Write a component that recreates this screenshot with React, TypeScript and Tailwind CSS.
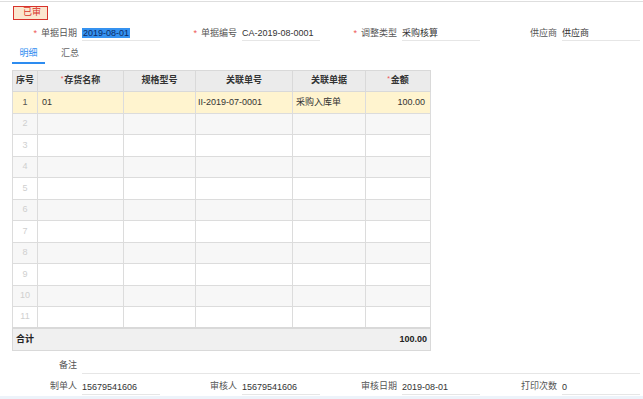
import React from "react";

const font = { fontFamily: '"Liberation Sans", "Noto Sans CJK SC", sans-serif' };

type FieldProps = { label: string; value?: string; required?: boolean; selected?: boolean };

const Field: React.FC<FieldProps> = ({ label, value, required, selected }) => (
  <div className="flex items-center w-[160px] h-[15px]">
    <div className="w-[78px] text-right text-[#555] pr-[1px]">
      {required && <span className="text-[#ee5555] mr-[4px]">*</span>}
      {label}
    </div>
    <div className="ml-[4px] w-[78px] h-[15px] border-b border-[#e6e6e6] text-[#333] leading-[14px]">
      {selected ? <span className="bg-[#3592f0] text-[#0c2a66] px-[1px]">{value}</span> : value}
    </div>
  </div>
);

const cols = ["w-[25px]", "w-[86px]", "w-[72px]", "w-[97px]", "w-[73px]", "w-[65px]"];

export default function App() {
  const rows = Array.from({ length: 11 }, (_, i) => i + 1);
  return (
    <div style={font} className="w-[643px] h-[399px] bg-white text-[9px] overflow-hidden flex flex-col">
      <div className="h-[2px] border-t border-[#dedede] mt-[1px]" />

      {/* status badge */}
      <div className="ml-[13px] mt-[3px] w-[35px] h-[14px] border-[1.5px] border-[#d8322b] bg-[#fbe6cf] text-[#d8322b] flex items-center pl-[9px]">
        已审
      </div>

      {/* head fields */}
      <div className="flex mt-[6px]">
        <Field label="单据日期" value="2019-08-01" required selected />
        <Field label="单据编号" value="CA-2019-08-0001" required />
        <Field label="调整类型" value="采购核算" required />
        <Field label="供应商" value="供应商" />
      </div>

      {/* tabs */}
      <div className="flex ml-[12px] mt-[5px] h-[18px] items-end">
        <div className="w-[33px] h-[18px] text-center text-[#2d8cf0] border-b-2 border-[#2d8cf0] leading-[14px]">明细</div>
        <div className="ml-[16px] h-[18px] text-[#666] leading-[14px]">汇总</div>
      </div>

      {/* grid */}
      <table className="ml-[12px] mt-[6px] w-[418px] table-fixed border-collapse border border-[#d9d9d9]">
        <thead>
          <tr className="h-[21px] bg-[#ebebeb] text-[#333] font-bold">
            <th className={`${cols[0]} border border-[#d9d9d9] font-bold`}>序号</th>
            <th className={`${cols[1]} border border-[#d9d9d9] font-bold`}>
              <span className="text-[#ee5555] font-normal text-[7px] align-top mr-[1px]">*</span>存货名称
            </th>
            <th className={`${cols[2]} border border-[#d9d9d9] font-bold`}>规格型号</th>
            <th className={`${cols[3]} border border-[#d9d9d9] font-bold`}>关联单号</th>
            <th className={`${cols[4]} border border-[#d9d9d9] font-bold`}>关联单据</th>
            <th className={`${cols[5]} border border-[#d9d9d9] font-bold`}>
              <span className="text-[#ee5555] font-normal text-[7px] align-top mr-[1px]">*</span>金额
            </th>
          </tr>
        </thead>
        <tbody>
          {rows.map((n) => {
            const first = n === 1;
            const bg = first ? "bg-[#fff4cf]" : n % 2 === 0 ? "bg-[#f7f7f7]" : "bg-white";
            return (
              <tr key={n} className={`h-[21.5px] ${bg} text-[#333]`}>
                <td className={`border border-[#dcdcdc] text-center ${first ? "text-[#555]" : "text-[#cfcfcf]"}`}>{n}</td>
                <td className="border border-[#dcdcdc] pl-[4px]">{first ? "01" : ""}</td>
                <td className="border border-[#dcdcdc]"></td>
                <td className="border border-[#dcdcdc] pl-[2px]">{first ? "II-2019-07-0001" : ""}</td>
                <td className="border border-[#dcdcdc] pl-[3px]">{first ? "采购入库单" : ""}</td>
                <td className="border border-[#dcdcdc] text-right pr-[5px]">{first ? "100.00" : ""}</td>
              </tr>
            );
          })}
          <tr className="h-[22px] bg-[#f0f0f0] font-bold text-[#222] border-t-2 border-[#d9d9d9]">
            <td colSpan={5} className="pl-[3px]">合计</td>
            <td className="text-right pr-[3px]">100.00</td>
          </tr>
        </tbody>
      </table>

      {/* remark */}
      <div className="flex items-center mt-[8px] h-[15px]">
        <div className="w-[78px] text-right text-[#555] pr-[1px]">备注</div>
        <div className="ml-[4px] w-[558px] h-[15px] border-b border-[#e6e6e6]" />
      </div>

      {/* footer fields */}
      <div className="flex mt-[6px]">
        <Field label="制单人" value="15679541606" />
        <Field label="审核人" value="15679541606" />
        <Field label="审核日期" value="2019-08-01" />
        <Field label="打印次数" value="0" />
      </div>

      <div className="flex-1 mt-[1px] bg-[#edf3fa]" />
    </div>
  );
}
